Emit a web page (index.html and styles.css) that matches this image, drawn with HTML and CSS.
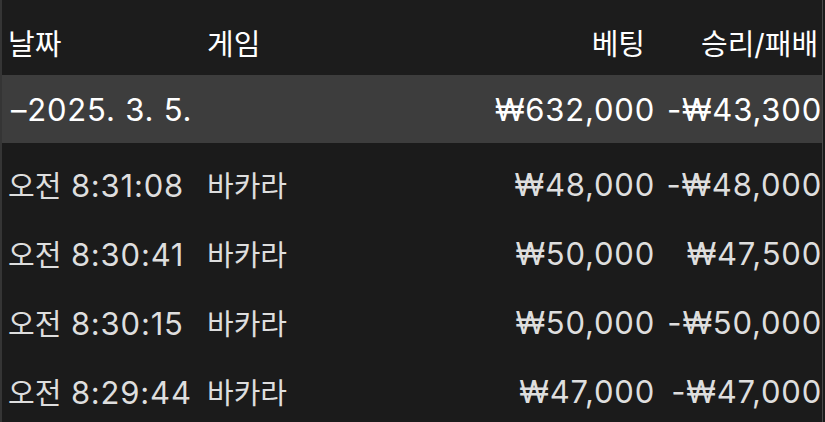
FILE: index.html
```html
<!DOCTYPE html>
<html lang="ko">
<head>
<meta charset="utf-8">
<link rel="stylesheet" href="styles.css">
</head>
<body>
<div class="table">
  <div class="row header">
    <div class="c date ko">날짜</div>
    <div class="c game ko">게임</div>
    <div class="c bet ko">베팅</div>
    <div class="c result ko">승리/패배</div>
  </div>
  <div class="row summary">
    <div class="c date">–2025. 3. 5.</div>
    <div class="c game"></div>
    <div class="c bet">₩632,000</div>
    <div class="c result">-₩43,300</div>
  </div>
  <div class="row item">
    <div class="c date"><span class="ko">오전</span> 8:31:08</div>
    <div class="c game ko">바카라</div>
    <div class="c bet">₩48,000</div>
    <div class="c result">-₩48,000</div>
  </div>
  <div class="row item">
    <div class="c date"><span class="ko">오전</span> 8:30:41</div>
    <div class="c game ko">바카라</div>
    <div class="c bet">₩50,000</div>
    <div class="c result">₩47,500</div>
  </div>
  <div class="row item">
    <div class="c date"><span class="ko">오전</span> 8:30:15</div>
    <div class="c game ko">바카라</div>
    <div class="c bet">₩50,000</div>
    <div class="c result">-₩50,000</div>
  </div>
  <div class="row item">
    <div class="c date"><span class="ko">오전</span> 8:29:44</div>
    <div class="c game ko">바카라</div>
    <div class="c bet">₩47,000</div>
    <div class="c result">-₩47,000</div>
  </div>
</div>
</body>
</html>
```

FILE: styles.css
```css
html, body {
  margin: 0;
  padding: 0;
  background: #1b1b1b;
}
body {
  width: 825px;
  height: 422px;
  overflow: hidden;
  font-family: Inter, "Noto Sans CJK KR", sans-serif;
  font-size: 31px;
  letter-spacing: 0.8px;
  color: #dedede;
}
.ko {
  font-size: 29px;
  letter-spacing: 0;
}
.table {
  width: 823px;
  height: 422px;
  border-left: 2px solid #353535;
  border-right: 1px solid #4a4a4a;
  box-sizing: border-box;
  overflow: hidden;
}
.row {
  display: grid;
  grid-template-columns: 205px 200px 248px 1fr;
  align-items: center;
  height: 69px;
  white-space: nowrap;
}
.row.item {
  padding-top: 13px;
  box-sizing: border-box;
}
.row.header {
  height: 75px;
  padding-top: 8px;
  box-sizing: border-box;
  color: #ffffff;
  background: #1c1c1c;
}
.row.summary {
  height: 68px;
  background: #3d3d3d;
  color: #ffffff;
}
.c { overflow: visible; }
.c.date { padding-left: 6px; }
.summary .c.date { padding-left: 9px; }
.c.bet { text-align: right; }
.c.result { text-align: right; }
.header .c.bet { padding-right: 10px; }
.header .c.result { text-align: left; padding-left: 46px; }
```
